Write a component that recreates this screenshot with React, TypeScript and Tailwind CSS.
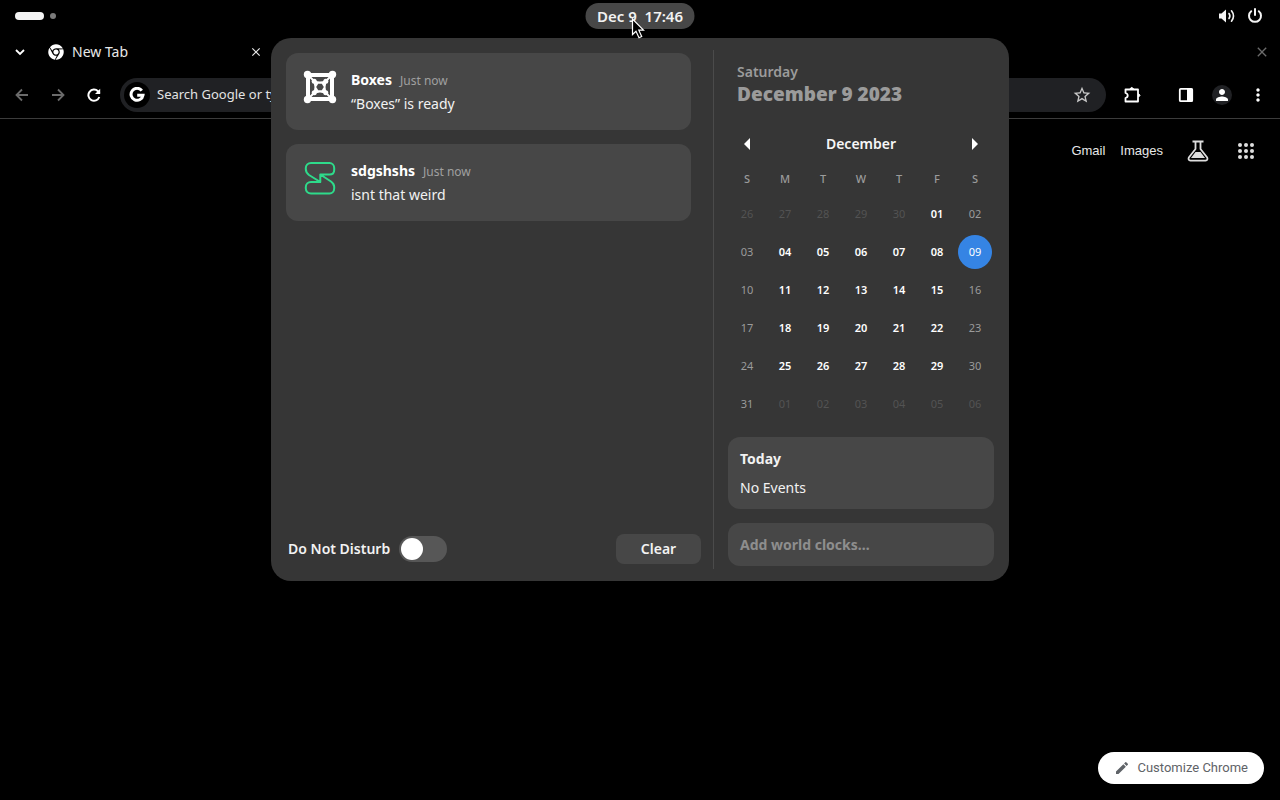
import React, { useState } from 'react';
import { FaChrome } from 'react-icons/fa';
import { MdClose, MdEdit, MdMoreVert, MdPerson, MdStarBorder } from 'react-icons/md';

const weekdays = ['S', 'M', 'T', 'W', 'T', 'F', 'S'];

const weeks = [
  ['26', '27', '28', '29', '30', '01', '02'],
  ['03', '04', '05', '06', '07', '08', '09'],
  ['10', '11', '12', '13', '14', '15', '16'],
  ['17', '18', '19', '20', '21', '22', '23'],
  ['24', '25', '26', '27', '28', '29', '30'],
  ['31', '01', '02', '03', '04', '05', '06'],
];

const BoxesIcon = () => (
  <svg viewBox="0 0 34 34" className="size-[34px]" fill="none" stroke="#fff">
    <rect x="5" y="5" width="24" height="24" strokeWidth="4" />
    <path d="M6 6l6 6M28 6l-6 6M6 28l6-6M28 28l-6-6" strokeWidth="2" />
    <path d="M11 11q6 3.500 12 0q-3.500 6 0 12q-6-3.500-12 0q3.500-6 0-12z" fill="#fff" strokeWidth="2.500" strokeLinejoin="round" />
    <path d="M15.200 13.800h3.600l2 3.200-2 3.200h-3.600l-2-3.200z" fill="#474747" stroke="none" />
    <g fill="#fff" stroke="none">
      <circle cx="4.500" cy="4.500" r="3.700" />
      <circle cx="29.500" cy="4.500" r="3.700" />
      <circle cx="4.500" cy="29.500" r="3.700" />
      <circle cx="29.500" cy="29.500" r="3.700" />
      <circle cx="11.200" cy="11.200" r="2.500" />
      <circle cx="22.800" cy="11.200" r="2.500" />
      <circle cx="11.200" cy="22.800" r="2.500" />
      <circle cx="22.800" cy="22.800" r="2.500" />
    </g>
  </svg>
);

const SquiggleIcon = () => (
  <svg viewBox="0 0 34 34" className="size-[34px]" fill="none" stroke="#2edb8b" strokeWidth="2" strokeLinejoin="round">
    <path d="M17.300 13.500H26.500C29.500 13.500 31.200 11.500 31.200 9V7C31.200 4 29 2 26.500 2H8C5 2 2.800 4 2.800 7V8C2.800 11 4 12.500 6 14L17.300 21V13.500L28 20.500C30 22 31.200 23.500 31.200 25.800V27.200C31.200 30.500 29 32.500 26.500 32.500H8C5 32.500 2.800 30.500 2.800 27.200V26.200C2.800 23 5 21 8 21H17.300" />
  </svg>
);

const notifications = [
  { title: 'Boxes', time: 'Just now', body: '“Boxes” is ready', icon: <BoxesIcon /> },
  { title: 'sdgshshs', time: 'Just now', body: 'isnt that weird', icon: <SquiggleIcon /> },
];

const dayClass = (week: number, col: number) => {
  if (week === 1 && col === 6) return 'bg-[#3584e4] text-white';
  if ((week === 0 && col < 5) || (week === 5 && col > 0)) return 'text-[#535353]';
  if (col === 0 || col === 6) return 'text-[#9b9b9b]';
  return 'font-semibold text-white';
};

const TopBar = () => (
  <header className="relative flex h-8 items-center justify-between pl-[15px] pr-[17px]">
    <button aria-label="Activities" className="flex items-center gap-1.5">
      <span className="h-2 w-[29px] rounded-full bg-[#f4f4f4]" />
      <span className="size-1.5 rounded-full bg-[#7b7b7b]" />
    </button>
    <button className="absolute left-1/2 top-[3px] h-[26px] w-[109px] -translate-x-1/2 whitespace-pre rounded-full bg-[#474747] text-[15px] font-semibold leading-6 text-[#f2f2f2]">
      Dec 9  17:46
    </button>
    <button aria-label="System menu" className="flex items-center gap-3 text-[#f4f4f4]">
      <svg viewBox="0 0 16 16" className="size-4" fill="none" stroke="currentColor" strokeWidth="1.6" strokeLinecap="round">
        <path d="M0 5.500h2.500L7 1.500v13L2.500 10.500H0z" fill="currentColor" stroke="none" />
        <path d="M10 5.500q1.800 2.500 0 5" />
        <path d="M12.500 2.800q4 5.200 0 10.400" />
      </svg>
      <svg viewBox="0 0 16 16" className="size-4" fill="none" stroke="currentColor" strokeWidth="2" strokeLinecap="round">
        <path d="M4.200 3.200a6 6 0 1 0 7.600 0" />
        <path d="M8 1v6" />
      </svg>
    </button>
  </header>
);

const Browser = () => (
  <>
    <div className="flex h-10 items-center pl-3 pr-2.5 text-[#e8e8e8]">
      <button aria-label="Search tabs" className="flex size-4 items-center justify-center">
        <svg viewBox="0 0 10 10" className="size-2.5" fill="none" stroke="#fff" strokeWidth="1.8">
          <path d="M1 3l4 4 4-4" />
        </svg>
      </button>
      <div className="ml-5 flex w-[215px] items-center gap-2">
        <FaChrome className="size-4 text-white" />
        <span className="flex-1 text-sm">New Tab</span>
        <button aria-label="Close tab">
          <MdClose className="size-3.5" />
        </button>
      </div>
      <button aria-label="Close window" className="ml-auto text-[#6b6b6b]">
        <MdClose className="size-4" />
      </button>
    </div>

    <div className="flex h-[47px] items-center border-b border-[#3c3c3c] px-1 text-white">
      <button aria-label="Back" className="flex w-9 justify-center text-[#6b6b6b]">
        <svg viewBox="0 0 14 14" className="size-3.5" fill="none" stroke="currentColor" strokeWidth="1.800">
          <path d="M13 7H2M7 1.500L1.500 7 7 12.500" />
        </svg>
      </button>
      <button aria-label="Forward" className="flex w-9 justify-center text-[#6b6b6b]">
        <svg viewBox="0 0 14 14" className="size-3.5" fill="none" stroke="currentColor" strokeWidth="1.800">
          <path d="M1 7h11M7 1.500L12.500 7 7 12.500" />
        </svg>
      </button>
      <button aria-label="Reload" className="flex w-9 justify-center">
        <svg viewBox="0 0 14 14" className="size-3.5" fill="none" stroke="currentColor" strokeWidth="2">
          <path d="M12.300 9A5.600 5.600 0 1 1 11 3.200L12.500 5" />
          <path d="M13.200.800V6H8z" fill="currentColor" stroke="none" />
        </svg>
      </button>
      <div className="mx-2 flex h-[34px] flex-1 items-center gap-[7px] rounded-full bg-[#202124] pl-1 pr-[14px]">
        <span className="flex size-[26px] items-center justify-center rounded-full bg-black">
          <svg viewBox="0 0 16 16" className="size-4" fill="none" stroke="#fff" strokeWidth="3">
            <path d="M12.800 3.600A6 6 0 1 0 14 8.200H8.200" />
          </svg>
        </span>
        <input
          type="text"
          aria-label="Address and search bar"
          placeholder="Search Google or type a URL"
          className="min-w-0 flex-1 bg-transparent text-[13px] outline-none placeholder:text-[#e3e3e3]"
        />
        <button aria-label="Bookmark this tab" className="text-[#c7c7c7]">
          <MdStarBorder className="size-5" />
        </button>
      </div>
      <button aria-label="Extensions" className="mr-[18px] flex w-9 justify-center">
        <svg viewBox="0 0 18 18" className="size-[18px]" fill="none" stroke="currentColor" strokeWidth="1.800" strokeLinejoin="round">
          <path d="M2.500 3.500h12.500v12H2.500v-3.500q2.200-.6 2.200-2.500T2.500 7z" />
          <path d="M7 3q1.700-3.200 3.500 0zM15.500 7.700q3 1.600 0 3.400z" fill="currentColor" strokeWidth="1" />
        </svg>
      </button>
      <button aria-label="Side panel" className="flex w-9 justify-center">
        <svg viewBox="0 0 16 16" className="size-4">
          <rect x="1.800" y="1.800" width="12.400" height="12.400" rx="1" fill="none" stroke="currentColor" strokeWidth="1.800" />
          <path d="M9 1.500h5.500v13H9z" fill="currentColor" />
        </svg>
      </button>
      <button aria-label="Profile" className="flex w-9 justify-center">
        <span className="flex size-5 items-center justify-center rounded-full bg-[#202124]">
          <MdPerson className="size-[18px]" />
        </span>
      </button>
      <button aria-label="Menu" className="flex w-9 justify-center">
        <MdMoreVert className="size-5" />
      </button>
    </div>

    <main className="flex flex-1 flex-col items-end justify-between px-4 pb-4 pt-4">
      <nav className="flex items-center pr-2.5 font-['Liberation_Sans',Arial,sans-serif] text-[13px] text-[#e8e8e8]">
        <a href="#gmail" className="mr-[15px]">Gmail</a>
        <a href="#images" className="mr-6">Images</a>
        <a href="#labs" aria-label="Search Labs" className="mr-[29px] flex h-8 items-center">
          <svg viewBox="0 0 22 22" className="size-[22px]" fill="none" stroke="#dedede" strokeWidth="1.800" strokeLinejoin="round">
            <path d="M5.500 1.500h11M8.500 1.500V9L1.800 17.500q-1 2.800 1.700 3.200h15q2.700-.4 1.700-3.200L13.500 9V1.500" />
            <path d="M8.500 12h5l4.500 6H4z" fill="#dedede" stroke="none" />
          </svg>
        </a>
        <a href="#apps" aria-label="Google apps">
          <svg viewBox="0 0 16 16" className="size-4" fill="#dedede">
            {[2, 8, 14].map((y) => [2, 8, 14].map((x) => <circle key={`${x}-${y}`} cx={x} cy={y} r="2" />))}
          </svg>
        </a>
      </nav>
      <button className="flex h-8 items-center gap-[7px] rounded-full bg-white px-4 font-['Roboto',sans-serif] text-[13px] text-[#5f6368]">
        <MdEdit className="size-4" />
        Customize Chrome
      </button>
    </main>
  </>
);

const Calendar = () => (
  <section>
    <div className="flex h-9 items-center justify-between px-[13px]">
      <button aria-label="Previous month" className="size-3">
        <svg viewBox="0 0 12 12" className="size-3" fill="#fff">
          <path d="M9 0v12L3 6z" />
        </svg>
      </button>
      <span className="text-sm font-semibold text-[#f7f7f7]">December</span>
      <button aria-label="Next month" className="size-3">
        <svg viewBox="0 0 12 12" className="size-3" fill="#fff">
          <path d="M3 0v12L9 6z" />
        </svg>
      </button>
    </div>
    <table className="mt-px w-full table-fixed text-center text-[11px]">
      <thead>
        <tr className="h-8">
          {weekdays.map((d, i) => (
            <th key={i} className="p-0 font-medium text-[#9b9b9b]">{d}</th>
          ))}
        </tr>
      </thead>
      <tbody>
        {weeks.map((week, w) => (
          <tr key={w} className="h-[38px]">
            {week.map((day, c) => (
              <td key={c} className="p-0">
                <button className={`mx-auto block size-[34px] rounded-full ${dayClass(w, c)}`}>{day}</button>
              </td>
            ))}
          </tr>
        ))}
      </tbody>
    </table>
  </section>
);

const DateMenu = () => {
  const [dnd, setDnd] = useState(false);

  return (
    <div className="absolute left-1/2 top-[38px] flex w-[738px] -translate-x-1/2 rounded-[20px] bg-[#363636] px-[15px] text-sm text-[#f2f2f2]">
      {/* Notifications */}
      <div className="flex flex-1 flex-col justify-between pb-[17px] pr-3 pt-[15px]">
        <ul className="mr-2.5 flex flex-col gap-[14px]">
          {notifications.map((n) => (
            <li key={n.title} className="flex h-[77px] gap-3.5 rounded-xl bg-[#474747] px-[17px] pt-[17px]">
              {n.icon}
              <div>
                <div className="flex h-5 items-baseline gap-2">
                  <span className="font-bold text-white">{n.title}</span>
                  <span className="text-xs text-[#a0a0a0]">{n.time}</span>
                </div>
                <p className="mt-1">{n.body}</p>
              </div>
            </li>
          ))}
        </ul>
        <div className="flex items-center justify-between">
          <label className="flex items-center gap-[9px] pl-0.5 font-semibold">
            Do Not Disturb
            <input
              type="checkbox"
              role="switch"
              checked={dnd}
              onChange={(e) => setDnd(e.target.checked)}
              className="h-[26px] w-12 appearance-none rounded-full bg-[#575757] p-0.5 before:block before:size-[22px] before:rounded-full before:bg-white checked:bg-[#3584e4] checked:before:ml-auto"
            />
          </label>
          <button className="h-[30px] w-[85px] rounded-lg bg-[#474747] font-semibold">Clear</button>
        </div>
      </div>

      <div className="my-3 w-px bg-[#4b4b4b]" />

      {/* Calendar side */}
      <div className="ml-[14px] flex w-[266px] flex-col pb-[15px] pt-[22px]">
        <button className="mb-[19px] h-[47px] pl-[9px] text-left text-[#9b9b9b]">
          <div className="font-semibold leading-5">Saturday</div>
          <div className="text-[19px] font-black leading-6">December 9 2023</div>
        </button>
        <Calendar />
        <button className="mt-[14px] h-[72px] rounded-xl bg-[#474747] px-3 text-left">
          <div className="font-bold">Today</div>
          <div className="mt-[9px]">No Events</div>
        </button>
        <button className="mt-[14px] h-[43px] rounded-xl bg-[#474747] px-3 text-left font-bold text-[#8e8e8e]">
          Add world clocks…
        </button>
      </div>
    </div>
  );
};

const Cursor = () => (
  <svg viewBox="0 0 14 21" className="absolute left-1/2 top-[18px] -ml-[9px] h-[21px] w-3.5" fill="#000" stroke="#fff" strokeWidth="1.200">
    <path d="M1.500 1v15.500l3.500-3.300 3 6.500 2.700-1.200-2.900-6.300H12.500z" />
  </svg>
);

const App: React.FC = () => (
  <div className="relative flex min-h-screen flex-col overflow-hidden bg-black font-['Noto_Sans',sans-serif]">
    <TopBar />
    <Browser />
    <DateMenu />
    <Cursor />
  </div>
);

export default App;
